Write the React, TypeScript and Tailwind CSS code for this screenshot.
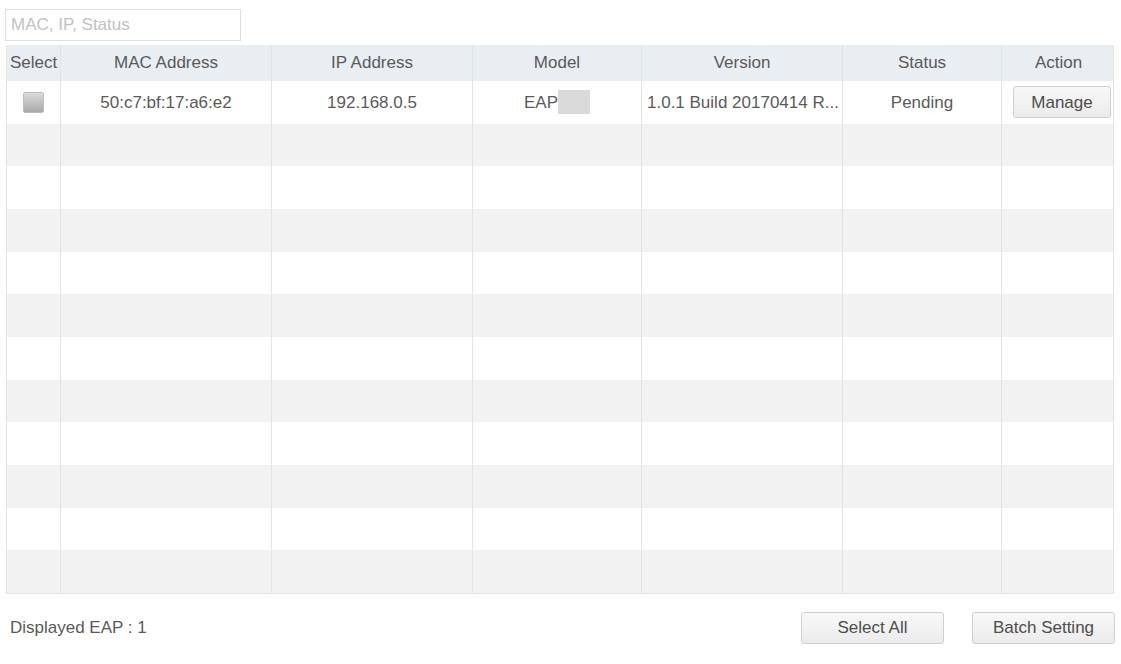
const cols = [
  { key: "select", label: "Select", w: "w-[54px]" },
  { key: "mac", label: "MAC Address", w: "w-[211px]" },
  { key: "ip", label: "IP Address", w: "w-[201px]" },
  { key: "model", label: "Model", w: "w-[169px]" },
  { key: "version", label: "Version", w: "w-[201px]" },
  { key: "status", label: "Status", w: "w-[159px]" },
  { key: "action", label: "Action", w: "w-[113px]" },
];

function Row({ index }: { index: number }) {
  const bg = index % 2 === 0 ? "bg-white" : "bg-[#f2f2f2]";
  const filled = index === 0;
  return (
    <div className={`flex h-[42.67px] ${bg}`}>
      {cols.map((c, i) => (
        <div
          key={c.key}
          className={`${c.w} shrink-0 flex items-center justify-center ${i < cols.length - 1 ? "border-r border-[#e3e3e3]" : ""}`}
        >
          {filled && c.key === "select" && (
            <span className="block size-[21px] rounded-[2px] border border-[#bdbdbd] bg-gradient-to-b from-[#dcdcdc] to-[#a8a8a8]" />
          )}
          {filled && c.key === "mac" && <span>50:c7:bf:17:a6:e2</span>}
          {filled && c.key === "ip" && <span>192.168.0.5</span>}
          {filled && c.key === "model" && (
            <span className="flex items-center">
              EAP
              <span className="block w-[32px] h-[24px] bg-[#dadada]" />
            </span>
          )}
          {filled && c.key === "version" && (
            <span className="w-full pl-[5px] whitespace-nowrap overflow-hidden">1.0.1 Build 20170414 R...</span>
          )}
          {filled && c.key === "status" && <span>Pending</span>}
          {filled && c.key === "action" && (
            <button className="w-[98px] h-[32px] ml-[7px] rounded-[3px] border border-[#cfcfcf] bg-gradient-to-b from-[#f8f8f8] to-[#ebebeb] text-[#4d4d4d]">
              Manage
            </button>
          )}
        </div>
      ))}
    </div>
  );
}

export default function App() {
  return (
    <div className="w-[1121px] h-[664px] bg-white text-[17px] text-[#5a5a5a] font-['Liberation_Sans',Arial,sans-serif] overflow-hidden">
      <div className="pt-[9px] pl-[5px]">
        <input
          className="w-[236px] h-[32px] border border-[#dedede] px-[5px] text-[17px] placeholder:text-[#c2c2c2] outline-none"
          placeholder="MAC, IP, Status"
        />
      </div>

      <div className="ml-[6px] mt-[4px] w-[1108px] border-l border-r border-b border-[#e3e3e3]">
        <div className="flex h-[36px] bg-[#e8eef2]">
          {cols.map((c, i) => (
            <div
              key={c.key}
              className={`${c.w} shrink-0 flex items-center justify-center ${i < cols.length - 1 ? "border-r border-[#dde4e8]" : ""}`}
            >
              {c.label}
            </div>
          ))}
        </div>
        {Array.from({ length: 12 }).map((_, i) => (
          <Row key={i} index={i} />
        ))}
      </div>

      <div className="flex items-center mt-[18px] pl-[10px] pr-[6px]">
        <span className="flex-1">Displayed EAP : 1</span>
        <button className="w-[143px] h-[32px] rounded-[3px] border border-[#cfcfcf] bg-gradient-to-b from-[#f8f8f8] to-[#ebebeb] text-[#4d4d4d]">
          Select All
        </button>
        <button className="w-[143px] h-[32px] ml-[28px] rounded-[3px] border border-[#cfcfcf] bg-gradient-to-b from-[#f8f8f8] to-[#ebebeb] text-[#4d4d4d]">
          Batch Setting
        </button>
      </div>
    </div>
  );
}
